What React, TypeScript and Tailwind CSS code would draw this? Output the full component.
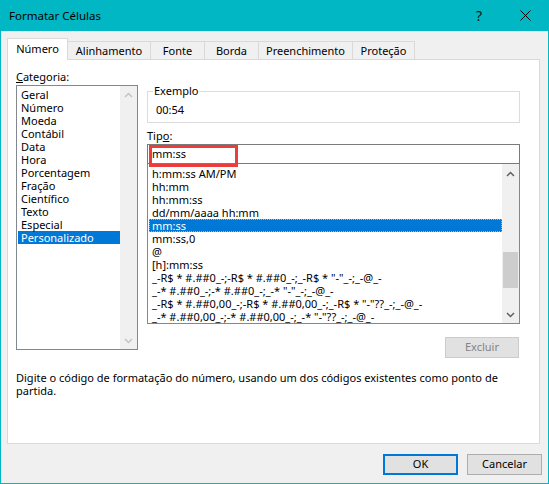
import React from "react";

const categorias = [
  "Geral",
  "Número",
  "Moeda",
  "Contábil",
  "Data",
  "Hora",
  "Porcentagem",
  "Fração",
  "Científico",
  "Texto",
  "Especial",
  "Personalizado",
];

const tipos = [
  "h:mm:ss AM/PM",
  "hh:mm",
  "hh:mm:ss",
  "dd/mm/aaaa hh:mm",
  "mm:ss",
  "mm:ss,0",
  "@",
  "[h]:mm:ss",
  '_-R$ * #.##0_-;-R$ * #.##0_-;_-R$ * "-"_-;_-@_-',
  '_-* #.##0_-;-* #.##0_-;_-* "-"_-;_-@_-',
  '_-R$ * #.##0,00_-;-R$ * #.##0,00_-;_-R$ * "-"??_-;_-@_-',
  '_-* #.##0,00_-;-* #.##0,00_-;_-* "-"??_-;_-@_-',
];

function Chevron({ up, color }: { up: boolean; color: string }) {
  return (
    <svg width="9" height="6" viewBox="0 0 9 6">
      {up ? (
        <polyline points="1,5 4.5,1.5 8,5" fill="none" stroke={color} strokeWidth="1.5" />
      ) : (
        <polyline points="1,1 4.5,4.5 8,1" fill="none" stroke={color} strokeWidth="1.5" />
      )}
    </svg>
  );
}

const tabs = [
  { label: "Número", w: "w-[61px]", active: true },
  { label: "Alinhamento", w: "w-[84px]", active: false },
  { label: "Fonte", w: "w-[55px]", active: false },
  { label: "Borda", w: "w-[55px]", active: false },
  { label: "Preenchimento", w: "w-[95px]", active: false },
  { label: "Proteção", w: "w-[63px]", active: false },
];

export default function App() {
  return (
    <div className="w-[549px] h-[484px] bg-[#f0f0f0] border-x border-b border-[#00b7c3] flex flex-col font-['Noto_Sans',sans-serif] text-[11px] text-black overflow-hidden">
      {/* Title bar */}
      <div className="h-[31px] shrink-0 bg-[#00b7c3] flex items-center pl-[8px]">
        <span className="text-[11.5px] text-black">Formatar Células</span>
        <div className="flex-1" />
        <div className="w-[46px] h-[31px] flex items-center justify-center text-[14px] text-[#111]">?</div>
        <div className="w-[46px] h-[31px] flex items-center justify-center">
          <svg width="11" height="11" viewBox="0 0 11 11">
            <line x1="0.5" y1="0.5" x2="10.5" y2="10.5" stroke="#000" strokeWidth="1" />
            <line x1="10.5" y1="0.5" x2="0.5" y2="10.5" stroke="#000" strokeWidth="1" />
          </svg>
        </div>
      </div>

      {/* Tabs */}
      <div className="mt-[7px] pl-[6px] h-[21px] flex items-end">
        {tabs.map((t) =>
          t.active ? (
            <div
              key={t.label}
              className={`${t.w} h-[22px] -mb-px relative z-10 bg-white border-x border-t border-[#d9d9d9] flex items-center justify-center`}
            >
              {t.label}
            </div>
          ) : (
            <div
              key={t.label}
              className={`${t.w} h-[18px] -ml-px bg-[#f0f0f0] border-x border-t border-[#d9d9d9] flex items-center justify-center pt-[1px]`}
            >
              {t.label}
            </div>
          )
        )}
      </div>

      {/* Panel */}
      <div className="ml-[6px] w-[533px] h-[385px] shrink-0 bg-white border border-[#d9d9d9] pt-[8px] pl-[8px] flex flex-col">
        <div className="flex">
          {/* Left column */}
          <div className="w-[122px] flex flex-col">
            <div className="h-[17px] leading-[17px]">
              <span className="underline">C</span>ategoria:
            </div>
            <div className="h-[265px] border border-[#828790] flex">
              <div className="flex-1 pt-[2px] pl-[1px]">
                {categorias.map((c) =>
                  c === "Personalizado" ? (
                    <div key={c} className="h-[13px] leading-[13px] pl-[3px] bg-[#0078d7] text-white">
                      {c}
                    </div>
                  ) : (
                    <div key={c} className="h-[13px] leading-[13px] pl-[3px]">
                      {c}
                    </div>
                  )
                )}
              </div>
              <div className="w-[17px] bg-[#f0f0f0] flex flex-col justify-between">
                <div className="h-[17px] flex items-center justify-center">
                  <Chevron up color="#c3c3c3" />
                </div>
                <div className="h-[17px] flex items-center justify-center">
                  <Chevron up={false} color="#c3c3c3" />
                </div>
              </div>
            </div>
          </div>

          {/* Right column */}
          <div className="ml-[9px] w-[373px] flex flex-col">
            <div className="mt-[23px] h-[32px] border border-[#dcdcdc] relative pl-[8px] pt-[10px] leading-[16px]">
              <span className="absolute left-[5px] -top-[9px] bg-white px-[1px] leading-[16px]">Exemplo</span>
              00:54
            </div>
            <div className="mt-[4px] h-[17px] leading-[17px]">
              Tip<span className="underline">o</span>:
            </div>
            <div className="h-[20px] border border-[#7a7a7a] pl-[4px] leading-[18px] relative">
              mm:ss
              <div className="absolute left-[1px] top-0 w-[89px] h-[22px] border-[3px] border-[#ec3c3c]" />
            </div>
            <div className="h-[160px] border-x border-b border-[#828790] flex">
              <div className="flex-1 pt-[3px] pl-[1px] overflow-hidden whitespace-nowrap">
                {tipos.map((t) =>
                  t === "mm:ss" ? (
                    <div
                      key={t}
                      className="h-[13px] leading-[11px] pl-[2px] bg-[#0078d7] text-white border border-dotted border-[#e0b040]"
                    >
                      {t}
                    </div>
                  ) : (
                    <div key={t} className="h-[13px] leading-[13px] pl-[3px]">
                      {t}
                    </div>
                  )
                )}
              </div>
              <div className="w-[17px] bg-[#f0f0f0] flex flex-col">
                <div className="h-[17px] flex items-center justify-center pt-[2px]">
                  <Chevron up color="#606060" />
                </div>
                <div className="h-[71px]" />
                <div className="h-[36px] ml-[1px] w-[15px] bg-[#cdcdcd]" />
                <div className="flex-1" />
                <div className="h-[17px] flex items-center justify-center">
                  <Chevron up={false} color="#606060" />
                </div>
              </div>
            </div>
            <div className="mt-[13px] self-end mr-[1px] w-[74px] h-[21px] bg-[#e1e1e1] border border-[#cccccc] text-[#838383] flex items-center justify-center">
              Excluir
            </div>
          </div>
        </div>
        <div className="mt-[13px] leading-[13px]">
          Digite o código de formatação do número, usando um dos códigos existentes como ponto de
          <br />
          partida.
        </div>
      </div>

      {/* Buttons */}
      <div className="mt-[10px] flex justify-end gap-[9px] pr-[6px]">
        <div className="w-[75px] h-[21px] bg-[#e1e1e1] border-2 border-[#0078d7] flex items-center justify-center">
          OK
        </div>
        <div className="w-[75px] h-[21px] bg-[#e1e1e1] border border-[#adadad] flex items-center justify-center">
          Cancelar
        </div>
      </div>
    </div>
  );
}
